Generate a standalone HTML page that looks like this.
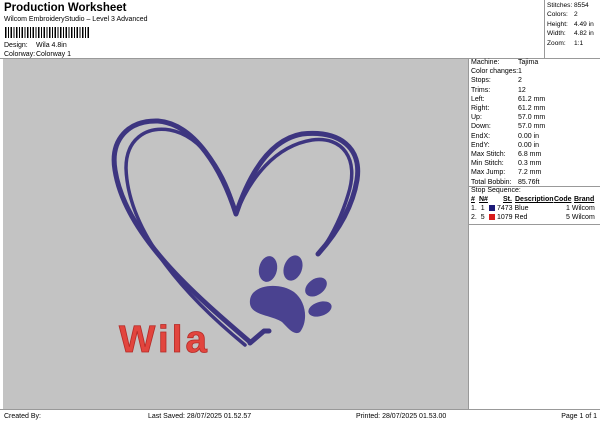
<html><head><style>
body{margin:0;width:600px;height:424px;background:#fff;font-family:"Liberation Sans",sans-serif;position:relative;overflow:hidden;font-size:7px;color:#000}
.a{position:absolute;white-space:nowrap;line-height:9px}
.r{position:absolute;left:471px;white-space:nowrap;line-height:9px}
.r span{position:absolute;left:47px}
.s{position:absolute;left:547px;white-space:nowrap;line-height:9px;font-size:6.6px}
.s span{position:absolute;left:27px}
</style></head><body>
<div class="a" style="left:4px;top:2px;font-size:11.5px;font-weight:bold;line-height:13px">Production Worksheet</div>
<div class="a" style="left:4px;top:15px">Wilcom EmbroideryStudio – Level 3 Advanced</div>
<div class="a" style="left:5px;top:27px;width:84px;height:11px;background:repeating-linear-gradient(90deg,#000 0 1.5px,#fff 1.5px 3px,#000 3px 4px,#fff 4px 5.5px)"></div>
<div class="a" style="left:4px;top:41px">Design:</div><div class="a" style="left:36px;top:41px">Wila 4.8in</div>
<div class="a" style="left:4px;top:50px">Colorway:</div><div class="a" style="left:36px;top:50px">Colorway 1</div>
<div class="a" style="left:544px;top:0;width:1px;height:59px;background:#999"></div>
<div class="s" style="top:1px">Stitches:<span>8554</span></div>
<div class="s" style="top:10px">Colors:<span>2</span></div>
<div class="s" style="top:19.5px">Height:<span>4.49 in</span></div>
<div class="s" style="top:29px">Width:<span>4.82 in</span></div>
<div class="s" style="top:38.5px">Zoom:<span>1:1</span></div>
<div class="a" style="left:0;top:58px;width:600px;height:1px;background:#999"></div>
<div class="a" style="left:3px;top:59px;width:465px;height:350px;background:#c3c3c3"></div>
<div class="a" style="left:468px;top:59px;width:1px;height:350px;background:#999"></div>
<div class="r" style="top:58px">Machine:<span>Tajima</span></div>
<div class="r" style="top:67.2px">Color changes:<span>1</span></div>
<div class="r" style="top:76.4px">Stops:<span>2</span></div>
<div class="r" style="top:85.6px">Trims:<span>12</span></div>
<div class="r" style="top:94.8px">Left:<span>61.2 mm</span></div>
<div class="r" style="top:104px">Right:<span>61.2 mm</span></div>
<div class="r" style="top:113.2px">Up:<span>57.0 mm</span></div>
<div class="r" style="top:122.4px">Down:<span>57.0 mm</span></div>
<div class="r" style="top:131.6px">EndX:<span>0.00 in</span></div>
<div class="r" style="top:140.8px">EndY:<span>0.00 in</span></div>
<div class="r" style="top:150px">Max Stitch:<span>6.8 mm</span></div>
<div class="r" style="top:159.2px">Min Stitch:<span>0.3 mm</span></div>
<div class="r" style="top:168.4px">Max Jump:<span>7.2 mm</span></div>
<div class="r" style="top:177.6px">Total Bobbin:<span>85.76ft</span></div>
<div class="a" style="left:469px;top:186px;width:131px;height:1px;background:#999"></div>
<div class="a" style="left:471px;top:186px">Stop Sequence:</div>
<div class="a" style="left:469px;top:224px;width:131px;height:1px;background:#999"></div>
<div class="a" style="left:471px;top:195px;font-weight:bold;text-decoration:underline">#</div>
<div class="a" style="left:479px;top:195px;font-weight:bold;text-decoration:underline">N#</div>
<div class="a" style="left:503px;top:195px;font-weight:bold;text-decoration:underline">St.</div>
<div class="a" style="left:515px;top:195px;font-weight:bold;text-decoration:underline">Description</div>
<div class="a" style="left:554px;top:195px;font-weight:bold;text-decoration:underline">Code</div>
<div class="a" style="left:574px;top:195px;font-weight:bold;text-decoration:underline">Brand</div>
<div class="a" style="left:471px;top:204px">1.&nbsp; 1</div><div class="a" style="left:489px;top:205px;width:6px;height:6px;background:#1c1a78"></div><div class="a" style="left:497px;top:204px">7473 Blue</div><div class="a" style="left:566px;top:204px">1 Wilcom</div>
<div class="a" style="left:471px;top:213px">2.&nbsp; 5</div><div class="a" style="left:489px;top:214px;width:6px;height:6px;background:#d81c1c"></div><div class="a" style="left:497px;top:213px">1079 Red</div><div class="a" style="left:566px;top:213px">5 Wilcom</div>
<svg class="a" style="left:0;top:0" width="600" height="424">
<g fill="none" stroke="#3d3580" stroke-linecap="round" stroke-linejoin="round">
<path d="M250 342 C195 295 125 235 115 170 C110 140 128 120 158 121 C195 124 222 170 236 214 C248 178 268 140 302 134 C340 130 362 148 357 180 C352 210 335 235 318 254" stroke-width="5"/>
<path d="M245 345 C190 300 128 235 126 168 C126 140 145 126 170 130 C203 136 226 175 236 214" stroke-width="3.5"/>
<path d="M236 214 C250 178 275 146 312 140 C342 136 360 158 348 195 C342 215 332 235 322 250" stroke-width="3.5"/>
<path d="M250 343 L264 331 L269 331" stroke-width="5"/>
</g>
<g fill="#4a4290">
<ellipse cx="268" cy="269" rx="9" ry="13" transform="rotate(12 268 269)"/>
<ellipse cx="293" cy="268" rx="9" ry="13" transform="rotate(20 293 268)"/>
<ellipse cx="316" cy="287" rx="8" ry="12" transform="rotate(55 316 287)"/>
<ellipse cx="320" cy="309" rx="7" ry="12" transform="rotate(72 320 309)"/>
<path d="M250 300 C252 284 280 282 294 292 C307 302 308 322 300 332 C294 336 288 328 282 322 C270 314 248 316 250 300Z"/>
</g>
<text x="119" y="352" font-family="Liberation Sans" font-weight="bold" font-size="38" fill="#e2453e" stroke="#b52a26" stroke-width="0.8" letter-spacing="3" textLength="91" lengthAdjust="spacingAndGlyphs">Wila</text>
</svg>
<div class="a" style="left:0;top:409px;width:600px;height:1px;background:#999"></div>
<div class="a" style="left:4px;top:412px">Created By:</div>
<div class="a" style="left:148px;top:412px">Last Saved: 28/07/2025 01.52.57</div>
<div class="a" style="left:356px;top:412px">Printed: 28/07/2025 01.53.00</div>
<div class="a" style="right:3px;top:412px">Page 1 of 1</div>
</body></html>
